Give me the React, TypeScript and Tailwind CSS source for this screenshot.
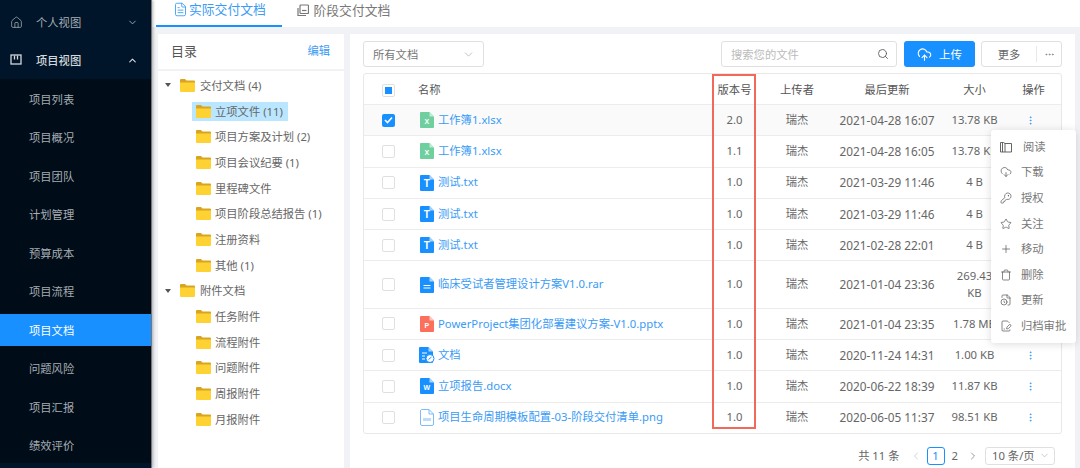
import React from 'react';
import {
  House, ChevronDown, ChevronUp, ChevronLeft, ChevronRight, Search, CloudUpload, Ellipsis, EllipsisVertical,
  CloudDownload, KeyRound, Star, Plus, Trash, FileClock, FileSignature, FileText,
} from 'lucide-react';

const subMenu = ['项目列表', '项目概况', '项目团队', '计划管理', '预算成本', '项目流程', '项目文档', '问题风险', '项目汇报', '绩效评价'];

const treeOne = ['立项文件 (11)', '项目方案及计划 (2)', '项目会议纪要 (1)', '里程碑文件', '项目阶段总结报告 (1)', '注册资料', '其他 (1)'];
const treeTwo = ['任务附件', '流程附件', '问题附件', '周报附件', '月报附件'];

type Kind = 'x' | 't' | 'r' | 'p' | 'doc' | 'w' | 'png';

const rows: { kind: Kind; name: string; ver: string; date: string; size: string; checked?: boolean }[] = [
  { kind: 'x', name: '工作簿1.xlsx', ver: '2.0', date: '2021-04-28 16:07', size: '13.78 KB', checked: true },
  { kind: 'x', name: '工作簿1.xlsx', ver: '1.1', date: '2021-04-28 16:05', size: '13.78 KB' },
  { kind: 't', name: '测试.txt', ver: '1.0', date: '2021-03-29 11:46', size: '4 B' },
  { kind: 't', name: '测试.txt', ver: '1.0', date: '2021-03-29 11:46', size: '4 B' },
  { kind: 't', name: '测试.txt', ver: '1.0', date: '2021-02-28 22:01', size: '4 B' },
  { kind: 'r', name: '临床受试者管理设计方案V1.0.rar', ver: '1.0', date: '2021-01-04 23:36', size: '269.43 KB' },
  { kind: 'p', name: 'PowerProject集团化部署建议方案-V1.0.pptx', ver: '1.0', date: '2021-01-04 23:35', size: '1.78 MB' },
  { kind: 'doc', name: '文档', ver: '1.0', date: '2020-11-24 14:31', size: '1.00 KB' },
  { kind: 'w', name: '立项报告.docx', ver: '1.0', date: '2020-06-22 18:39', size: '11.87 KB' },
  { kind: 'png', name: '项目生命周期模板配置-03-阶段交付清单.png', ver: '1.0', date: '2020-06-05 11:37', size: '98.51 KB' },
];

const BookIcon = ({ size, className }: { size?: number; strokeWidth?: number; className?: string }) => (
  <svg width={size} height={size} viewBox="0 0 12 12" fill="none" stroke="currentColor" strokeWidth={0.9} className={className}>
    <path d="M.5 1.500h3l1.500 1v8.500H.5zM5 2.500h6.500V11H5" />
    <path d="M2.500 1.500V11" />
  </svg>
);

const menu = [
  { label: '阅读', icon: BookIcon, textClass: 'ml-[11px]' },
  { label: '下载', icon: CloudDownload, textClass: 'ml-[9px]' },
  { label: '授权', icon: KeyRound, textClass: 'ml-[9px]' },
  { label: '关注', icon: Star, textClass: 'ml-[9px]' },
  { label: '移动', icon: Plus, textClass: 'ml-[9px]' },
  { label: '删除', icon: Trash, textClass: 'ml-[9px]' },
  { label: '更新', icon: FileClock, textClass: 'ml-[9px]' },
  { label: '归档审批', icon: FileSignature, textClass: 'ml-[9px]' },
];

const Folder = () => (
  <svg width="15" height="13" viewBox="0 0 15 13" className="shrink-0">
    <path d="M0 1a1 1 0 0 1 1-1h4l1.500 1.500H14a1 1 0 0 1 1 1V4H0z" fill="#d9a520" />
    <path d="M0 3.500h15V12a1 1 0 0 1-1 1H1a1 1 0 0 1-1-1z" fill="#ffd233" />
  </svg>
);

const FileIcon = ({ kind }: { kind: Kind }) => {
  if (kind === 'png') {
    return (
      <svg width="14" height="17" viewBox="0 0 14 17" className="shrink-0">
        <path d="M1.500 .5H9L13.500 5V15a1.500 1.500 0 0 1-1.500 1.500H2A1.500 1.500 0 0 1 .5 15V2A1.500 1.500 0 0 1 1.500 .5z" fill="#fff" stroke="#7dbcf7" />
        <path d="M9 .5V5h4.500" fill="none" stroke="#7dbcf7" />
        <rect x="3" y="9" width="8" height="3" fill="#bcdcfa" />
      </svg>
    );
  }
  if (kind === 'doc') {
    return (
      <svg width="16" height="16" viewBox="0 0 16 16" className="-mx-px shrink-0">
        <path d="M0 1a1 1 0 0 1 1-1h8.500L14 4.500V15a1 1 0 0 1-1 1H1a1 1 0 0 1-1-1z" fill="#1890ff" />
        <path d="M9.500 0V4.500H14z" fill="#a9d4fb" />
        <path d="M3 6h5M3 9h3M3 12h3" stroke="#fff" strokeWidth="1" />
        <circle cx="11" cy="11.500" r="4" fill="#fff" stroke="#1890ff" />
        <path d="M9.500 12.500l3-2.500" stroke="#1890ff" />
      </svg>
    );
  }
  const fill = kind === 'x' ? '#6fcf9f' : kind === 'p' ? '#fb6f5c' : '#1890ff';
  const fold = kind === 'x' ? '#c2ecd6' : kind === 'p' ? '#fdc8c0' : '#a9d4fb';
  const letter = kind === 'x' ? 'X' : kind === 'p' ? 'P' : kind === 'w' ? 'W' : 'T';
  const size = kind === 't' ? 10 : 7;
  return (
    <svg width="14" height="16" viewBox="0 0 14 16" className="shrink-0">
      <path d="M0 1a1 1 0 0 1 1-1h8.500L14 4.500V15a1 1 0 0 1-1 1H1a1 1 0 0 1-1-1z" fill={fill} />
      <path d="M9.500 0V4.500H14z" fill={fold} />
      {kind === 'r' ? (
        <path d="M3.500 8.500h7M3.500 11h7" stroke="#fff" strokeWidth="1.200" />
      ) : (
        <text x="6.800" y={kind === 't' ? 12 : 11.500} textAnchor="middle" fontSize={size} fontWeight="700" fill="#fff" fontFamily="Liberation Sans, sans-serif">{letter}</text>
      )}
    </svg>
  );
};

const Box = ({ checked, half }: { checked?: boolean; half?: boolean }) => {
  if (checked) {
    return (
      <span className="flex h-[13px] w-[13px] items-center justify-center rounded-[2px] bg-[#1890ff]">
        <svg width="9" height="8" viewBox="0 0 9 8"><path d="M1 4l2.500 2.500L8 1.500" fill="none" stroke="#fff" strokeWidth="1.600" /></svg>
      </span>
    );
  }
  return (
    <span className="flex h-[13px] w-[13px] items-center justify-center rounded-[2px] border border-[#e0e0e0] bg-white">
      {half && <span className="h-[7px] w-[7px] bg-[#1890ff]" />}
    </span>
  );
};

const gridCols = 'grid grid-cols-[49px_299px_45px_80px_100px_75px_36px_14px] items-center';

export default function App() {
  return (
    <div className="relative flex h-[468px] w-[1080px] overflow-hidden bg-[#f0f2f5] font-['Noto_Sans','Noto_Sans_CJK_SC',sans-serif] text-[11.3px] text-[#666]">
      {/* Sidebar */}
      <aside className="z-10 flex w-[152px] shrink-0 flex-col border-r border-[#777] bg-[#000c17] shadow-[1px_0_3px_rgba(0,0,0,0.3)]">
        <div className="bg-[#001529] pt-[3px]">
          <div className="flex h-[38px] items-center pl-[10px] pr-[13px] text-[#a6adb4]">
            <House size={13} strokeWidth={1.4} />
            <span className="ml-[13px] flex-1 pt-[2px]">个人视图</span>
            <ChevronDown size={11} />
          </div>
          <div className="flex h-[38px] items-center pl-[10px] pr-[13px] font-medium text-[#d5d8da]">
            <svg width="13" height="12" viewBox="0 0 13 12" fill="none" stroke="currentColor" strokeWidth="1.300">
              <rect x="1" y="1" width="10" height="9" />
              <path d="M4.500 1.500v4M7.500 1.500v4" />
            </svg>
            <span className="ml-[13px] flex-1 pt-[2px]">项目视图</span>
            <ChevronUp size={11} strokeWidth={2.5} />
          </div>
        </div>
        <nav className="flex flex-1 flex-col gap-[6.5px] pt-[4px]">
          {subMenu.map((item) => (
            <div
              key={item}
              className={`flex h-[32px] shrink-0 items-center pl-[29px] pt-[2px] ${item === '项目文档' ? 'bg-[#1890ff] text-white' : 'text-[#a6adb4]'}`}
            >
              {item}
            </div>
          ))}
        </nav>
        <div className="h-[5px] shrink-0 bg-[#001529]" />
      </aside>

      <main className="flex min-w-0 flex-1 flex-col">
        {/* Tabs */}
        <div className="flex h-[27px] shrink-0 items-start bg-white pl-[4px] text-[12.800px]">
          <div className="flex h-[27px] w-[126px] items-center gap-[1.5px] border-b-2 border-[#1890ff] pb-[6px] pl-[16.5px] text-[#3a9bf5]">
            <FileText size={15} strokeWidth={1.4} />
            实际交付文档
          </div>
          <div className="ml-[15px] flex h-[27px] items-center gap-[4.5px] pb-[6px] text-[#777]">
            <svg width="12" height="13" viewBox="0 0 12 13" fill="none" stroke="currentColor" strokeWidth="1.200">
              <path d="M1 4v7.500h8" />
              <rect x="3" y="1" width="8.500" height="8.500" rx="1" />
              <path d="M5 6.500h4.500" />
            </svg>
            阶段交付文档
          </div>
        </div>

        <div className="flex min-h-0 flex-1 gap-[6px] pl-[6px] pr-[5px] pt-[7px]">
          {/* Directory */}
          <section className="w-[186px] shrink-0 bg-white">
            <div className="flex h-[37px] items-center justify-between border-b-2 border-[#f0f2f5] pl-[13px] pr-[14px]">
              <span className="text-[13px] text-[#555]">目录</span>
              <span className="text-[#3a9bf5]">编辑</span>
            </div>
            <div className="pt-[1.500px]">
              <div className="flex h-[25.700px] items-center pl-[7px]">
                <span className="mr-[9px] h-0 w-0 border-x-[3px] border-t-[4px] border-x-transparent border-t-[#555]" />
                <Folder />
                <span className="ml-[5px] pt-[2px]">交付文档 (4)</span>
              </div>
              {treeOne.map((item, i) => (
                <div key={item} className="flex h-[25.700px] items-center pl-[34px]">
                  <div className={`flex h-[19px] items-center pl-[4px] pr-[5px] ${i === 0 ? 'bg-[#bae7ff]' : ''}`}>
                    <Folder />
                    <span className="ml-[4px] pt-[2px]">{item}</span>
                  </div>
                </div>
              ))}
              <div className="flex h-[25.700px] items-center pl-[7px]">
                <span className="mr-[9px] h-0 w-0 border-x-[3px] border-t-[4px] border-x-transparent border-t-[#555]" />
                <Folder />
                <span className="ml-[5px] pt-[2px]">附件文档</span>
              </div>
              {treeTwo.map((item) => (
                <div key={item} className="flex h-[25.700px] items-center pl-[38px]">
                  <Folder />
                  <span className="ml-[4px] pt-[2px]">{item}</span>
                </div>
              ))}
            </div>
          </section>

          {/* Files */}
          <section className="flex min-w-0 flex-1 flex-col bg-white px-[13px] pt-[7px]">
            <div className="flex h-[26px] shrink-0 items-center">
              <div className="flex h-full w-[121px] items-center justify-between rounded-[3px] border border-[#e0e0e0] pl-[9px] pr-[8px] text-[#777]">
                <span className="pt-[2px]">所有文档</span>
                <ChevronDown size={13} strokeWidth={1.1} className="text-[#999]" />
              </div>
              <div className="ml-auto flex h-full w-[176px] items-center justify-between rounded-[3px] border border-[#e0e0e0] pl-[9px] pr-[7px] text-[#bbb]">
                <span className="pt-[2px]">搜索您的文件</span>
                <Search size={12} strokeWidth={1.7} className="text-[#555]" />
              </div>
              <button className="ml-[7px] flex h-full w-[71px] items-center justify-center gap-[7px] rounded-[3px] bg-[#1890ff] text-[11.500px] text-white">
                <CloudUpload size={15} strokeWidth={1.8} />
                <span className="pt-[2px]">上传</span>
              </button>
              <div className="ml-[6px] flex h-full w-[81px] items-center rounded-[3px] border border-[#e0e0e0] text-[#666]">
                <span className="flex-1 pt-[2px] text-center">更多</span>
                <span className="flex h-[16px] w-[25px] items-center justify-center border-l border-[#e8e8e8]">
                  <Ellipsis size={11} className="text-[#888]" />
                </span>
              </div>
            </div>

            {/* Table */}
            <div className="mt-[6px] shrink-0 rounded-[3px] border border-[#e8e8e8]">
              <div className={`${gridCols} h-[30px] pt-[2px] text-[#555]`}>
                <div className="flex justify-center"><Box half /></div>
                <div className="pl-[5px]">名称</div>
                <div className="text-center">版本号</div>
                <div className="text-center">上传者</div>
                <div className="text-center">最后更新</div>
                <div className="text-center">大小</div>
                <div className="whitespace-nowrap pl-[7px] text-center">操作</div>
              </div>
              {rows.map((r, i) => (
                <div
                  key={i}
                  className={`${gridCols} min-h-[31.300px] border-t border-[#ececec] py-[6.500px] leading-[16.600px] ${r.checked ? 'bg-[#fafafa]' : ''}`}
                >
                  <div className="flex justify-center"><Box checked={r.checked} /></div>
                  <div className="flex items-center gap-[4px] pl-[7px] text-[#3a9bf5]">
                    <FileIcon kind={r.kind} />
                    <span className="whitespace-nowrap">{r.name}</span>
                  </div>
                  <div className="text-center">{r.ver}</div>
                  <div className="text-center">瑞杰</div>
                  <div className="whitespace-nowrap text-center text-[11.800px]">{r.date}</div>
                  <div className="px-[12px] text-center">{r.size}</div>
                  <div className="flex justify-center text-[#1890ff]"><EllipsisVertical size={11} strokeWidth={1.5} /></div>
                </div>
              ))}
            </div>

            {/* Pagination */}
            <div className="mt-[13px] flex h-[18px] shrink-0 items-center justify-end pr-[7px] text-[#666]">
              <span className="pt-[2px]">共 11 条</span>
              <ChevronLeft size={12} strokeWidth={1.3} className="ml-[10px] text-[#bbb]" />
              <span className="ml-[5px] flex h-[18px] w-[18px] items-center justify-center rounded-[3px] border border-[#1890ff] pt-[2px] text-[#1890ff]">1</span>
              <span className="ml-[7px] pt-[2px]">2</span>
              <ChevronRight size={12} strokeWidth={1.3} className="ml-[9px]" />
              <span className="ml-[6px] flex h-[18px] w-[70px] items-center justify-between rounded-[3px] border border-[#e0e0e0] pl-[6px] pr-[4px]">
                <span className="pt-[2px]">10 条/页</span>
                <ChevronDown size={11} strokeWidth={1.1} className="text-[#999]" />
              </span>
            </div>
          </section>
        </div>
      </main>

      {/* Version column highlight */}
      <div className="absolute left-[712px] top-[74px] h-[355px] w-[44px] border-2 border-[#f0695a]" />

      {/* Row action menu */}
      <div className="absolute left-[991px] top-[130px] z-20 w-[85px] rounded-[3px] bg-white py-[4px] pl-[9px] text-[#777] shadow-[0_1px_8px_rgba(0,0,0,0.15)]">
        {menu.map(({ label, icon: Icon, textClass }) => (
          <div key={label} className="flex h-[25.600px] items-center">
            <Icon size={12} strokeWidth={1.4} className="shrink-0 text-[#555]" />
            <span className={`${textClass} whitespace-nowrap pt-[1px]`}>{label}</span>
          </div>
        ))}
      </div>
    </div>
  );
}
